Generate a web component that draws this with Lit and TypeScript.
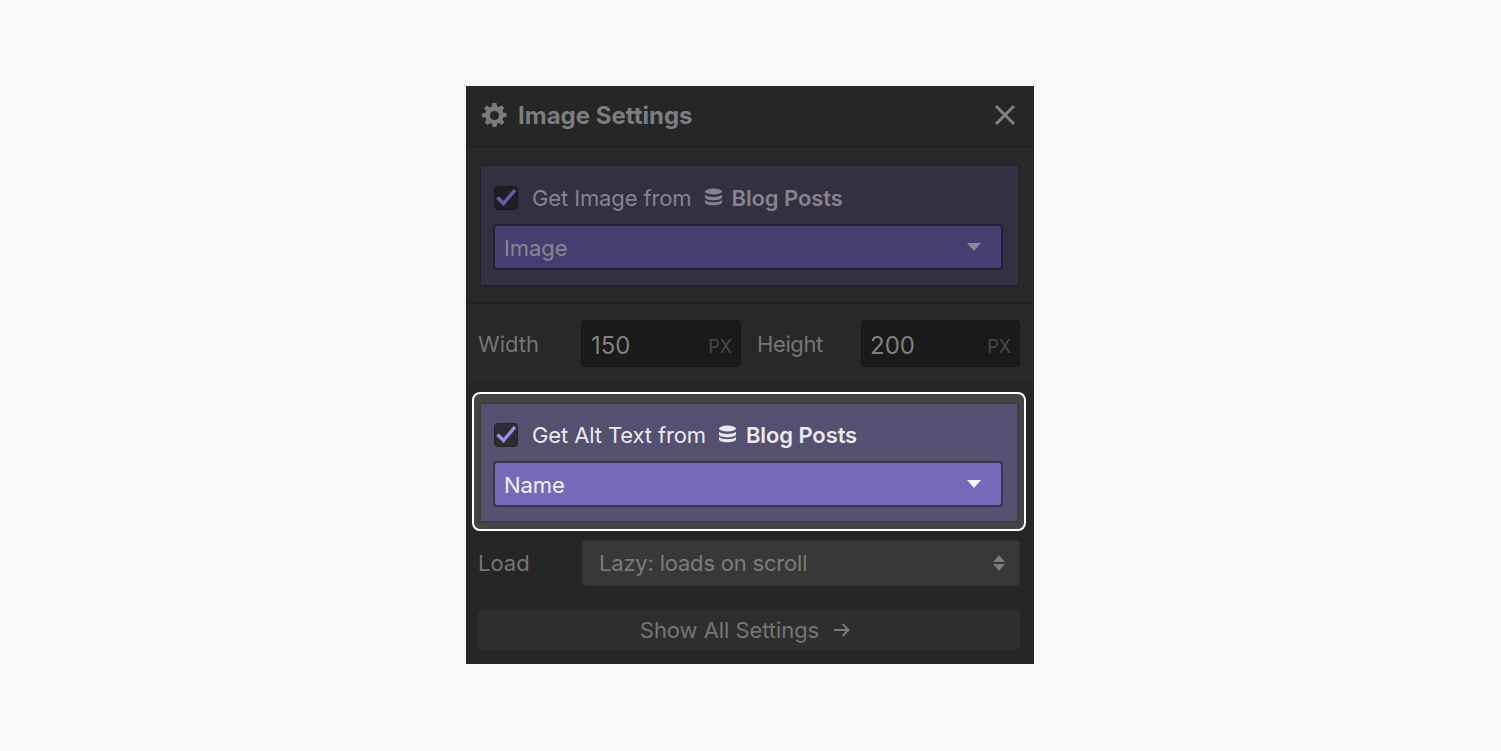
import { LitElement, html, css, svg } from "lit";
import { customElement } from "lit/decorators.js";

const gear = svg`<path fill-rule="evenodd" d="M10.300 1h3.400l.5 2.900c.6.2 1.200.4 1.700.7l2.400-1.700 2.400 2.400-1.700 2.400c.3.5.6 1.100.7 1.700l2.900.5v3.400l-2.900.5c-.2.6-.4 1.200-.7 1.700l1.700 2.400-2.400 2.400-2.400-1.700c-.5.3-1.100.6-1.700.7l-.5 2.900h-3.400l-.5-2.900c-.6-.2-1.200-.4-1.700-.7l-2.400 1.700-2.400-2.400 1.700-2.400c-.3-.5-.6-1.100-.7-1.700L1 13.700v-3.400l2.900-.5c.2-.6.4-1.200.7-1.700L2.900 5.700l2.400-2.400 2.400 1.700c.5-.3 1.100-.6 1.700-.7L10.300 1ZM12 8a4 4 0 1 0 0 8 4 4 0 0 0 0-8Z"/>`;

const db = svg`<ellipse cx="8.500" cy="3.500" rx="7.500" ry="3"/><path d="M1 6.800c1.500 1.500 4.300 2.200 7.500 2.200S14.500 8.300 16 6.800v2.400C16 11 12.600 12.200 8.500 12.200S1 11 1 9.200V6.800Z"/><path d="M1 12c1.500 1.500 4.300 2.200 7.500 2.200S14.500 13.500 16 12v2.200c0 1.800-3.400 3-7.500 3S1 16 1 14.200V12Z"/>`;

@customElement("app-root")
export class AppRoot extends LitElement {
  static styles = css`
    :host {
      display: flex;
      justify-content: center;
      min-height: 751px;
      padding-right: 1px;
      background: #f7f8fa;
      font-family: Inter, "Liberation Sans", sans-serif;
    }
    .panel {
      width: 568px;
      height: 578px;
      margin-top: 86px;
      background: #262626;
      color: #7f7f7f;
      font-size: 22px;
      box-sizing: border-box;
      display: flex;
      flex-direction: column;
    }
    .header {
      height: 62px;
      flex: none;
      box-sizing: border-box;
      border-bottom: 2px solid #222222;
      display: flex;
      align-items: center;
      padding: 0 17px 2px 16px;
    }
    .gear {
      width: 25px;
      height: 25px;
      fill: #7b7b7b;
      margin-right: 11px;
    }
    .title {
      font-size: 24px;
      font-weight: 700;
      flex: 1;
      color: #7d7d7d;
    }
    .close {
      width: 24px;
      height: 24px;
      stroke: #808080;
      stroke-width: 3;
      fill: none;
    }
    .section {
      padding: 16px 14px 15px 13px;
      border-bottom: 2px solid #222222;
      background: #282828;
    }
    .card {
      box-sizing: border-box;
      height: 123px;
      border: 2px solid #222230;
      border-radius: 3px;
      background: #333042;
      padding: 16px 15px 0 12px;
    }
    .bound {
      display: flex;
      align-items: center;
      height: 32px;
      color: #85838f;
      white-space: nowrap;
    }
    .check {
      width: 24px;
      height: 24px;
      box-sizing: border-box;
      border-radius: 4px;
      background: #201f27;
      border: 1px solid #19181d;
      margin: 0 14px 1px 1px;
      flex: none;
    }
    .check svg {
      display: block;
      width: 24px;
      height: 24px;
      margin: -1px;
      stroke: #6c5cae;
      stroke-width: 3.400;
      fill: none;
    }
    .db {
      width: 17px;
      height: 18px;
      fill: #85838f;
      margin: 0 10px 2px 13px;
      flex: none;
    }
    .bound b {
      font-weight: 600;
      letter-spacing: -0.1px;
    }
    .bound span:not(.check) {
      letter-spacing: -0.12px;
    }
    .dropdown {
      box-sizing: border-box;
      height: 46px;
      margin-top: 10px;
      border: 2px solid #222130;
      border-radius: 4px;
      background: #483d70;
      color: #88868f;
      display: flex;
      align-items: center;
      justify-content: space-between;
      padding: 0 20px 0 9px;
    }
    .dropdown span {
      padding-top: 2px;
      letter-spacing: -0.1px;
    }
    .caret {
      width: 14px;
      height: 8px;
      fill: #8b8994;
    }
    .size-row {
      height: 81px;
      box-sizing: border-box;
      padding: 0 0 0 12px;
      display: flex;
      align-items: center;
      gap: 15px;
      border-bottom: 2px solid #222222;
      background: #282828;
      flex: none;
    }
    .label {
      color: #757575;
      width: 88px;
      flex: none;
    }
    .field {
      box-sizing: border-box;
      width: 160px;
      height: 47px;
      background: #1a1a1a;
      border: 1px solid #171717;
      border-radius: 4px;
      display: flex;
      align-items: center;
      justify-content: space-between;
      padding: 3px 9px 0;
      color: #808080;
      font-size: 24px;
    }
    .field.narrow {
      width: 159px;
      margin-left: 1px;
      padding-left: 8px;
    }
    .size-row .gap {
      margin-left: 1px;
      width: 88px;
      letter-spacing: -0.4px;
    }
    .field small {
      font-size: 18px;
      color: #484848;
      margin: 3px -1px 0 0;
    }
    .focus {
      margin: 7px 8px 0 6px;
      box-sizing: border-box;
      height: 139px;
      border: 2px solid #ffffff;
      border-radius: 8px;
      background: #444444;
      padding: 8px 5px 0 5px;
      flex: none;
    }
    .focus .card {
      height: 121px;
      border-color: #3d3d3d;
      background: #565070;
      padding-top: 15px;
      padding-right: 14px;
    }
    .focus .bound {
      color: #ebe9f3;
    }
    .focus .check {
      background: #2d2c33;
      border-color: #232227;
    }
    .focus .check svg {
      stroke: #9d8cf0;
    }
    .focus .db {
      fill: #ebe9f3;
    }
    .focus .dropdown {
      background: #7569b8;
      border-color: #38364a;
      color: #f4f2fb;
    }
    .focus .caret {
      fill: #f4f2fb;
    }
    .load-row {
      display: flex;
      align-items: center;
      margin-top: 9px;
      padding: 0 14px 0 12px;
      flex: none;
    }
    .load-row .label {
      width: 104px;
    }
    .select {
      box-sizing: border-box;
      flex: 1;
      height: 46px;
      background: #383838;
      border: 1px solid #303030;
      border-radius: 4px;
      display: flex;
      align-items: center;
      justify-content: space-between;
      padding: 0 14px 0 16px;
      color: #7b7b7b;
      letter-spacing: -0.2px;
    }
    .stepper {
      width: 12px;
      height: 16px;
      fill: #7b7b7b;
    }
    .more {
      box-sizing: border-box;
      height: 40px;
      margin: 24px 14px 0 12px;
      padding: 0 8px 0 0;
      background: #2e2e2e;
      border-radius: 4px;
      display: flex;
      align-items: center;
      justify-content: center;
      gap: 15px;
      color: #757575;
      flex: none;
      letter-spacing: -0.06px;
    }
    .arrow {
      width: 16px;
      height: 14px;
      stroke: #7b7b7b;
      stroke-width: 2;
      fill: none;
    }
  `;

  private boundCard(label: string, value: string) {
    return html`<div class="card">
      <div class="bound">
        <span class="check">
          <svg viewBox="0 0 24 24"><path d="M3.500 11.500l6 6L21 4"></path></svg>
        </span>
        <span>${label}</span>
        <svg class="db" viewBox="1 0 15 18" preserveAspectRatio="none">${db}</svg>
        <b>Blog Posts</b>
      </div>
      <div class="dropdown">
        <span>${value}</span>
        <svg class="caret" viewBox="0 0 14 8"><path d="M0 0h14L7 8z"></path></svg>
      </div>
    </div>`;
  }

  render() {
    return html`<div class="panel">
      <div class="header">
        <svg class="gear" viewBox="1 1 22 22">${gear}</svg>
        <span class="title">Image Settings</span>
        <svg class="close" viewBox="0 0 24 24"><path d="M3 3l18 18M21 3L3 21"></path></svg>
      </div>
      <div class="section">${this.boundCard("Get Image from", "Image")}</div>
      <div class="size-row">
        <span class="label">Width</span>
        <div class="field"><span>150</span><small>PX</small></div>
        <span class="label gap">Height</span>
        <div class="field narrow"><span>200</span><small>PX</small></div>
      </div>
      <div class="focus">${this.boundCard("Get Alt Text from", "Name")}</div>
      <div class="load-row">
        <span class="label">Load</span>
        <div class="select">
          <span>Lazy: loads on scroll</span>
          <svg class="stepper" viewBox="0 0 12 16"><path d="M6 0l6 7H0zM6 16l6-7H0z"></path></svg>
        </div>
      </div>
      <div class="more">
        <span>Show All Settings</span>
        <svg class="arrow" viewBox="0 0 16 14"><path d="M0 7h14.500M8.500 1l6 6-6 6"></path></svg>
      </div>
    </div>`;
  }
}
